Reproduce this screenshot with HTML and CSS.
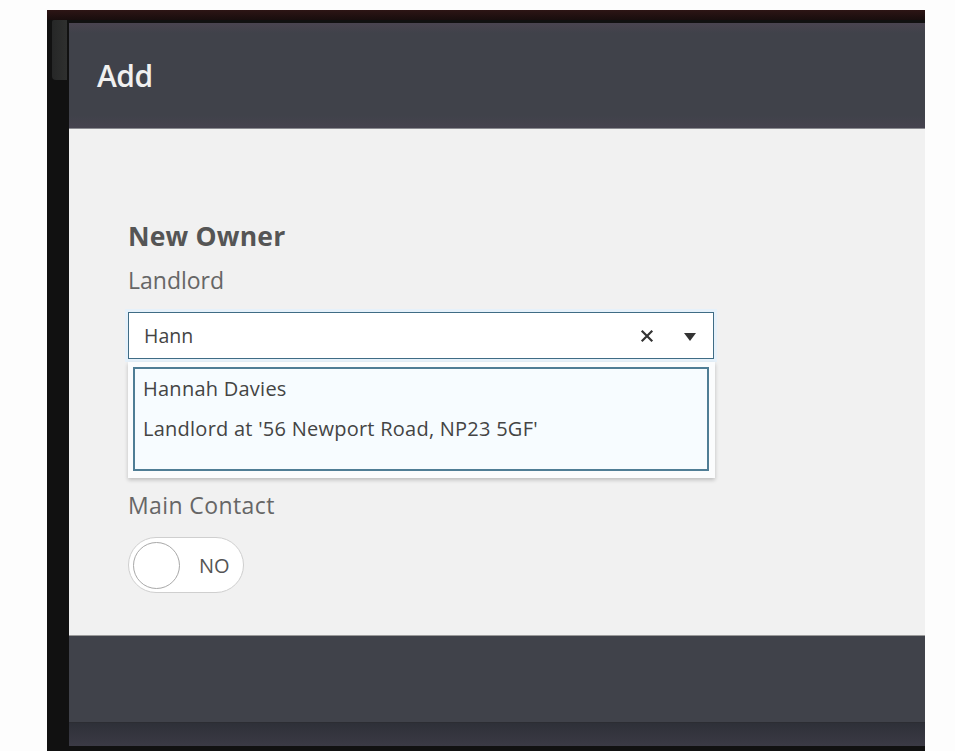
FILE: index.html
```html
<!DOCTYPE html>
<html>
<head>
<meta charset="utf-8">
<link rel="stylesheet" href="styles.css">
</head>
<body>
<div class="frame">
  <div class="strip"></div>
  <div class="main">
    <div class="gutter"><div class="gutter-block"></div></div>
    <div class="modal">
      <div class="modal-header"><span class="title">Add</span></div>
      <div class="modal-body">
        <div class="section-title">New Owner</div>
        <div class="label">Landlord</div>
        <div class="field">
          <div class="input">
            <span class="value">Hann</span>
            <span class="icons">
              <svg class="clear" width="14" height="14" viewBox="0 0 14 14"><path d="M2.5 2.5 L11.5 11.5 M11.5 2.5 L2.5 11.5" stroke="#333" stroke-width="2.2" stroke-linecap="square"/></svg>
              <svg class="caret" width="14" height="10" viewBox="0 0 14 10"><path d="M1 1 L13 1 L7 9 Z" fill="#333"/></svg>
            </span>
          </div>
          <div class="dropdown">
            <div class="list">
              <div class="item">Hannah Davies</div>
              <div class="item">Landlord at '56 Newport Road, NP23 5GF'</div>
            </div>
          </div>
        </div>
        <div class="label contact">Main Contact</div>
        <div class="toggle">
          <span class="knob"></span>
          <span class="toggle-text">NO</span>
        </div>
      </div>
      <div class="modal-footer"></div>
      <div class="modal-band"></div>
    </div>
  </div>
</div>
</body>
</html>
```
FILE: styles.css
```css
html, body {
  margin: 0;
  padding: 0;
  background: #fdfdfd;
  font-family: "Open Sans", "Noto Sans", sans-serif;
}
.frame {
  margin: 10px 0 0 47px;
  width: 878px;
  height: 741px;
  background: #111111;
  display: flex;
  flex-direction: column;
  overflow: hidden;
}
.strip {
  height: 10px;
  flex: none;
  background: linear-gradient(#2d1515, #180d0d);
}
.main {
  flex: 1;
  display: flex;
}
.gutter {
  width: 22px;
  flex: none;
  background: #111111;
}
.gutter-block {
  margin: 0 0 0 5px;
  width: 15px;
  height: 60px;
  background: linear-gradient(90deg, #262727, #2f302f);
  border-radius: 2px 0 0 4px;
}
.modal {
  flex: 1;
  margin-top: 3px;
  display: flex;
  flex-direction: column;
}
.modal-header {
  height: 106px;
  flex: none;
  box-sizing: border-box;
  background: linear-gradient(#4a4450 0px, #40424a 10px, #40424a 92px, #46434f 106px);
  border-bottom: 1px solid #8a8a90;
  padding-left: 28px;
  display: flex;
  align-items: center;
}
.title {
  color: #f0f0f0;
  font-size: 30px;
  font-weight: 600;
  letter-spacing: -0.5px;
  line-height: 40px;
}
.modal-body {
  height: 507px;
  flex: none;
  box-sizing: border-box;
  background: #f1f1f1;
  padding: 91px 0 0 59px;
  border-bottom: 1px solid #9a9a9a;
}
.section-title {
  color: #555555;
  font-size: 26.5px;
  font-weight: 700;
  line-height: 32px;
  letter-spacing: 0.2px;
}
.label {
  color: #666666;
  font-size: 23px;
  line-height: 30px;
  margin-top: 13px;
}
.field {
  position: relative;
  margin-top: 17px;
  width: 586px;
}
.input {
  height: 47px;
  box-sizing: border-box;
  border: 1px solid #3f6c85;
  background: #ffffff;
  box-shadow: 0 0 0 3px #e6f1fa;
  display: flex;
  align-items: center;
  justify-content: space-between;
  padding: 0 16px 0 15px;
}
.value {
  color: #444444;
  font-size: 19.5px;
}
.icons {
  display: flex;
  align-items: center;
  gap: 29px;
}
.clear { display: block; }
.caret { display: block; margin-top: 2px; }
.dropdown {
  position: absolute;
  left: 0;
  top: 50px;
  width: 587px;
  height: 116px;
  box-sizing: border-box;
  padding: 5px 6px 7px 5px;
  background: #fbfcfd;
  box-shadow: 0 2px 4px rgba(0, 0, 0, 0.22);
}
.list {
  height: 104px;
  box-sizing: border-box;
  border: 2px solid #4f7d95;
  background: #f7fcff;
}
.item {
  height: 40px;
  line-height: 40px;
  padding-left: 8px;
  color: #444444;
  font-size: 20px;
  letter-spacing: 0.25px;
  white-space: nowrap;
}
.label.contact {
  margin-top: 131px;
  letter-spacing: 0.4px;
}
.toggle {
  margin-top: 17px;
  width: 116px;
  height: 56px;
  box-sizing: border-box;
  border: 1px solid #cfcfcf;
  border-radius: 28px;
  background: #ffffff;
  display: flex;
  align-items: center;
  padding-left: 4px;
}
.knob {
  width: 47px;
  height: 47px;
  box-sizing: border-box;
  border: 1px solid #a8a8a8;
  border-radius: 50%;
  background: #ffffff;
  flex: none;
}
.toggle-text {
  margin-left: 19px;
  color: #555555;
  font-size: 20px;
}
.modal-footer {
  height: 86px;
  flex: none;
  background: #40424a;
  border-bottom: 1px solid #2c2d33;
}
.modal-band {
  height: 23px;
  flex: none;
  background: linear-gradient(#2e3038, #3b3a45);
}
```
